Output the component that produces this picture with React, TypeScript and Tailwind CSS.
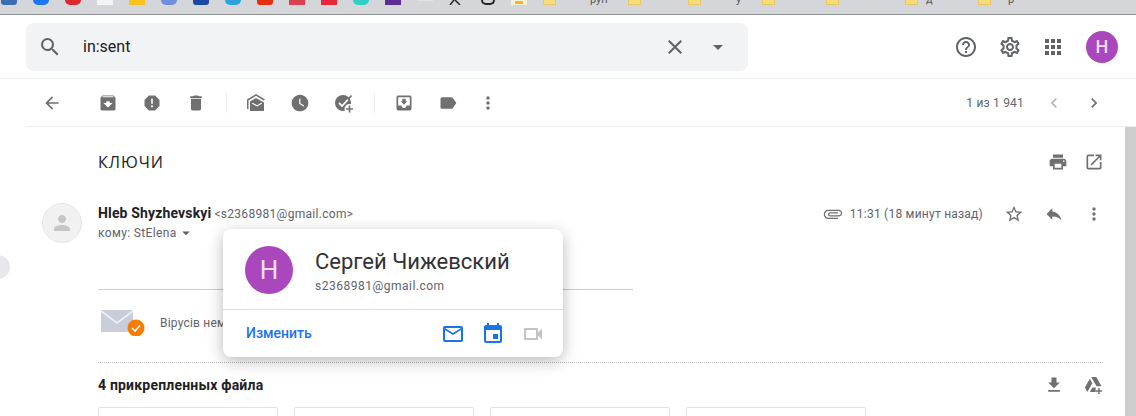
import React from 'react';
import {
  MdArrowBack, MdArchive, MdReport, MdDelete, MdWatchLater, MdMoveToInbox, MdLabel, MdMoreVert,
  MdSearch, MdClose, MdArrowDropDown, MdHelpOutline, MdOutlineSettings, MdApps, MdChevronLeft, MdChevronRight,
  MdPrint, MdOpenInNew, MdAttachFile, MdStarBorder, MdReply, MdFileDownload, MdMailOutline,
  MdEvent, MdOutlineVideocam, MdPerson,
} from 'react-icons/md';

const bookmarks = [
  'bg-[#3b6fb0] rounded-b-[3px]', 'bg-[#1877f2] rounded-b-full', 'bg-[#e0262e] rounded-b-full', 'bg-[#f4f4f4]', 'bg-[#f6c21c]',
  'bg-[#6f8fe0] rounded-b-full', 'bg-[#1b47a8] rounded-b-[3px]', 'bg-[#2aa3e0] rounded-b-full', 'bg-[#e23010] rounded-b-[3px]',
  'bg-[#d94050]', 'bg-[#e8283a]', 'bg-[#2fd0c8] rounded-b-full', 'bg-[#5b2d9a]',
];

function MarkUnread() {
  return (
    <svg width="20" height="20" viewBox="0 0 20 20" fill="#707070">
      <path d="M10 1 1 6.500V16h1.500V7.400L10 2.800l7.500 4.600L19 6.500z" />
      <path d="M4 8.500 10 5l8 4.500V18H4zm1.800 1.900v.1l5.200 3 5.200-3v-.1l-.9-.6-4.300 2.400-4.300-2.400z" fillRule="evenodd" />
    </svg>
  );
}

function AddTaskFilled() {
  return (
    <svg width="22" height="22" viewBox="0 0 22 22">
      <circle cx="10" cy="11" r="8" fill="#707070" />
      <path d="M6 11l3 3 6-6.500" fill="none" stroke="#fff" strokeWidth="1.800" />
      <path d="M15 7.500l3.500-4" fill="none" stroke="#707070" strokeWidth="1.800" />
      <circle cx="16.500" cy="17" r="5" fill="#fff" />
      <path d="M15.700 13.500h1.600v2.700H20v1.600h-2.700v2.700h-1.600v-2.700H13v-1.600h2.700z" fill="#707070" />
    </svg>
  );
}

function AddToDriveFilled() {
  return (
    <svg width="20" height="20" viewBox="0 0 24 24" fill="#707070">
      <path d="M8.700 2.500h6l6.300 11h-6z" />
      <path d="M7 4.500 1 15l3 5.500 6-10.500z" />
      <path d="M7 20.500l3-5.500h4v5.500z" />
      <path d="M17 15.500v2.700h-2.700v1.800H17v2.700h1.800V20h2.700v-1.800h-2.700v-2.700z" />
    </svg>
  );
}

function Slot({ children, className = 'w-[44px]' }: any) {
  return <div className={`${className} flex items-center justify-center shrink-0 text-[#707070]`}>{children}</div>;
}

function Clipped({ text, className }: any) {
  return (
    <span className={`h-[5px] overflow-hidden text-[11px] leading-[13px] text-[#55565a] whitespace-nowrap ${className}`}>
      <span className="block -mt-[7px]">{text}</span>
    </span>
  );
}

function Folder({ className }: any) {
  return <span className={`w-[13px] h-[5px] bg-[#f7dc7a] border-x border-b border-[#e8c860] ${className}`} />;
}

export default function App() {
  return (
    <div className="relative w-[1136px] h-[416px] overflow-hidden bg-white font-['Roboto',sans-serif] text-[#202124]">
      <div className="h-[15px] bg-[#d5d6da] border-b border-[#8f9094] flex items-start pl-[1px]">
        <div className="flex items-start gap-[16px]">
          {bookmarks.map((c, i) => (
            <span key={i} className={`w-[16px] h-[5px] ${c}`} />
          ))}
          <span className="w-[16px] h-[1px] bg-[#e2e3e6]" />
          <svg width="16" height="5" viewBox="0 0 16 5" className="shrink-0">
            <path d="M1 5 5 0M6 0l5 5" stroke="#26262a" strokeWidth="1.500" />
          </svg>
          <span className="w-[14px] h-[5px] rounded-b-full border-2 border-t-0 border-[#26262a]" />
          <span className="w-[16px] h-[5px] bg-[#f6f0d8] flex items-center justify-center"><span className="w-[8px] h-[3px] bg-[#f2b632]" /></span>
        </div>
        <Folder className="ml-[16px]" />
        <Clipped text="руп" className="ml-[34px] w-[20px]" />
        <Folder className="ml-[18px]" />
        <Folder className="ml-[47px]" />
        <Clipped text="у" className="ml-[35px] w-[6px]" />
        <Folder className="ml-[20px]" />
        <Folder className="ml-[51px]" />
        <Folder className="ml-[66px]" />
        <Clipped text="д" className="ml-[8px] w-[9px]" />
        <Folder className="ml-[43px]" />
        <Clipped text="р" className="ml-[17px] w-[6px]" />
      </div>

      <div className="h-[64px] border-b border-[#efefef] flex items-center pl-[26px]">
        <div className="w-[722px] h-[48px] rounded-lg bg-[#f1f3f4] flex items-center pl-[12px] pr-[18px]">
          <MdSearch size={24} className="text-[#5f6368]" />
          <span className="ml-[21px] text-[16px] text-[#202124]">in:sent</span>
          <MdClose size={24} className="ml-auto text-[#5f6368]" />
          <MdArrowDropDown size={24} className="ml-[19px] text-[#5f6368]" />
        </div>
        <MdHelpOutline size={24} className="ml-[206px] text-[#5f6368]" />
        <MdOutlineSettings size={24} className="ml-[20px] text-[#5f6368]" />
        <MdApps size={24} className="ml-[19px] text-[#5f6368]" />
        <div className="ml-[21px] w-[32px] h-[32px] rounded-full bg-[#ab47bc] text-[#f3dff6] text-[18px] font-medium flex items-center justify-center">H</div>
      </div>

      <div className="ml-[26px] h-[48px] border-b border-[#efefef] flex items-center pl-[4px] pr-[22px]">
        <Slot><MdArrowBack size={20} /></Slot>
        <Slot className="w-[44px] ml-[12px]"><MdArchive size={20} /></Slot>
        <Slot><MdReport size={20} /></Slot>
        <Slot><MdDelete size={20} /></Slot>
        <div className="w-px h-[20px] bg-[#eeeeee] ml-[8px] mr-[7px]" />
        <Slot><MarkUnread /></Slot>
        <Slot><MdWatchLater size={20} /></Slot>
        <Slot><AddTaskFilled /></Slot>
        <div className="w-px h-[20px] bg-[#eeeeee] ml-[8px] mr-[7px]" />
        <Slot><MdMoveToInbox size={20} /></Slot>
        <Slot><MdLabel size={20} /></Slot>
        <Slot className="w-[36px]"><MdMoreVert size={20} /></Slot>
        <span className="ml-auto mr-[10px] text-[12px] tracking-[0.2px] text-[#5f6368]">1 из 1 941</span>
        <Slot className="w-[40px] !text-[#b4b6b9]"><MdChevronLeft size={20} /></Slot>
        <Slot className="w-[40px]"><MdChevronRight size={20} /></Slot>
      </div>

      <div className="flex h-[289px]">
        <div className="w-[1125px]">
          <div className="h-[70px] flex items-center pl-[98px] pr-[13px]">
            <h2 className="text-[16px] font-['Open_Sans',sans-serif] tracking-[1px] text-[#202124]">КЛЮЧИ</h2>
            <Slot className="w-[36px] ml-auto"><MdPrint size={20} /></Slot>
            <Slot className="w-[36px]"><MdOpenInNew size={20} /></Slot>
          </div>

          <div className="flex pt-[6px] pl-[42px] pr-[11px] h-[46px]">
            <div className="w-[40px] h-[40px] rounded-full bg-[#f1f1f1] border border-[#e6e6e6] flex items-center justify-center">
              <MdPerson size={24} className="text-[#c6c6c6]" />
            </div>
            <div className="ml-[16px]">
              <div className="leading-[18px] mt-[1px]">
                <span className="text-[14px] tracking-[0.15px] font-bold text-[#202124]">Hleb Shyzhevskyi</span>
                <span className="ml-[3px] text-[12px] tracking-[0.3px] text-[#5f6368]">&lt;s2368981@gmail.com&gt;</span>
              </div>
              <div className="flex items-center text-[12px] leading-[20px] text-[#5f6368] tracking-[0.35px]">
                кому: StElena
                <MdArrowDropDown size={18} />
              </div>
            </div>
            <div className="ml-auto h-[20px] mt-[1px] flex items-center">
              <MdAttachFile size={20} className="rotate-90 text-[#707070]" />
              <span className="ml-[7px] mr-[11px] text-[12px] tracking-[0.23px] text-[#5f6368]">11:31 (18 минут назад)</span>
              <Slot className="w-[40px]"><MdStarBorder size={20} /></Slot>
              <Slot className="w-[40px]"><MdReply size={20} /></Slot>
              <Slot className="w-[40px]"><MdMoreVert size={20} /></Slot>
            </div>
          </div>

          <div className="ml-[98px] mt-[46px] w-[535px] h-px bg-[#cccccc]" />

          <div className="ml-[101px] mt-[20px] h-[26px] flex items-center">
            <svg width="44" height="26" viewBox="0 0 44 26" className="shrink-0">
              <path d="M0 0h32v22H0z" fill="#c9cdd9" />
              <path d="M0 1l16 12L32 1" fill="none" stroke="#eef0f4" strokeWidth="1.600" />
              <circle cx="35" cy="18" r="8.500" fill="#f57c00" />
              <path d="M31 18l3 3 5-5.500" fill="none" stroke="#fff" strokeWidth="1.600" />
            </svg>
            <span className="ml-[15px] text-[12px] text-[#5f6368] tracking-[0.2px] whitespace-nowrap">Вірусів немає</span>
          </div>

          <div className="ml-[98px] mt-[26px] w-[1005px] border-t border-dotted border-[#bdbdbd]" />

          <div className="ml-[98px] w-[1005px] h-[44px] flex items-center text-[14px] tracking-[0.2px] font-bold text-[#202124]">
            4 прикрепленных файла
            <Slot className="w-[40px] ml-auto translate-x-[11px]"><MdFileDownload size={20} /></Slot>
            <Slot className="w-[40px] translate-x-[11px]"><AddToDriveFilled /></Slot>
          </div>

          <div className="ml-[98px] flex gap-[16px]">
            {[0, 1, 2, 3].map(i => (
              <div key={i} className="w-[180px] h-[40px] border border-[#e2e2e2] rounded-t-[2px]" />
            ))}
          </div>
        </div>
        <div className="w-[11px] bg-[#cdcdcd]" />
      </div>

      <div className="absolute left-[-14px] top-[255px] w-[24px] h-[24px] rounded-full bg-[#e8e8ec]" />

      <div className="absolute left-[223px] top-[229px] w-[340px] h-[128px] bg-white rounded-lg shadow-[0_4px_16px_rgba(0,0,0,0.28)]">
        <div className="h-[81px] border-b border-[#dadce0] flex items-center pl-[22px]">
          <div className="w-[48px] h-[48px] rounded-full bg-[#ab47bc] text-[#f3dff6] text-[26px] flex items-center justify-center mt-[2px]">H</div>
          <div className="ml-[22px] mt-[4px]">
            <div className="text-[22px] leading-[28px] text-[#303134]">Сергей Чижевский</div>
            <div className="text-[12px] leading-[16px] mt-[2px] text-[#5f6368] tracking-[0.5px]">s2368981@gmail.com</div>
          </div>
        </div>
        <div className="h-[47px] flex items-center pl-[23px] pr-[18px]">
          <span className="text-[14px] font-medium text-[#1a73e8]">Изменить</span>
          <MdMailOutline size={24} className="ml-auto text-[#1a73e8]" />
          <MdEvent size={24} className="ml-[16px] text-[#1a73e8]" />
          <MdOutlineVideocam size={24} className="ml-[16px] text-[#c4c4c4]" />
        </div>
      </div>
    </div>
  );
}
